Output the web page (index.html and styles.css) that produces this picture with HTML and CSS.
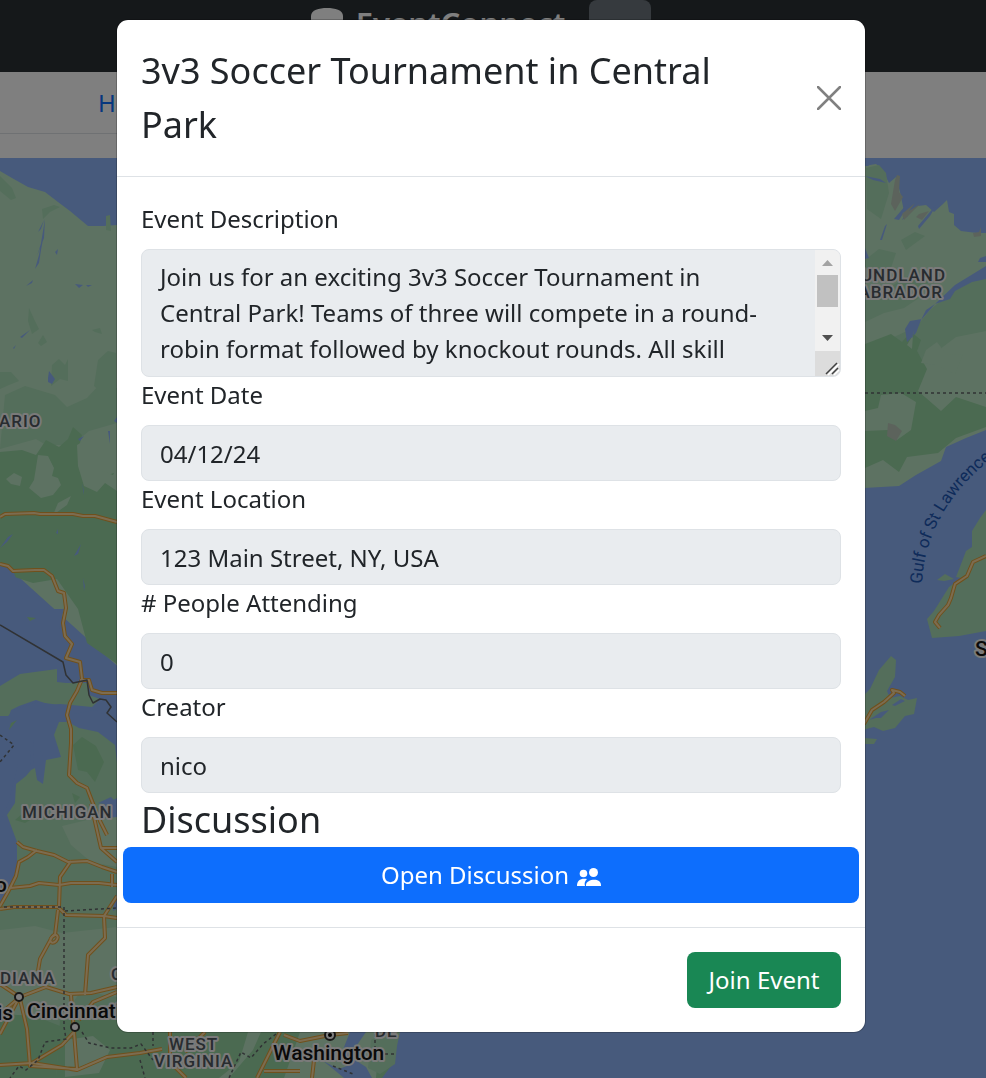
FILE: index.html
```html
<!DOCTYPE html>
<html lang="en">
<head>
<meta charset="utf-8">
<meta name="viewport" content="width=device-width, initial-scale=1">
<title>EventConnect</title>
<link rel="stylesheet" href="styles.css">
</head>
<body>
<div class="page">
  <header class="topbar">
    <svg class="logo" viewBox="0 0 32 40" aria-hidden="true"><path d="M0 8C0 2 8 0 16 0s16 2 16 8v24c0 10-32 10-32 0z"/></svg>
    <span class="brand">EventConnect</span>
    <button class="topbar-button" type="button" aria-label="Menu"></button>
  </header>
  <nav class="tabs"><a class="tab" href="#">Home</a></nav>
  <main class="map">
    <svg class="map-canvas" viewBox="0 158 986 920" preserveAspectRatio="xMinYMin slice" role="img" aria-label="Map">
      <rect class="water" y="158" width="986" height="920"/>
      <!-- Northern Ontario -->
      <path class="land" d="M0 171l12 7 16 9 17 5 13 10 12 9 18 15 15 0 14-1 20-2 18 5V700L0 560z"/>
      <path class="scrub" d="M0 176l12 12 4 10-5 2-11-9zM42 209l12-4 6 2-10 5-7 7zM106 216l4-1 1 16-5-1zM29 308l5 11 5 10-7 5-4-13zM38 343l5-8 4 7-6 4zM92 330l8-2 2 6-7-2zM98 360l10-9 8 2V400l-12-5-10-9zM52 365l7-6 6 6 3-6v22l-8-2-9 7zM0 372l11 0 8 9-10 4-9 4zM5 395l20-9 30 9 12 12 20-9 14-15 16 5v35l-28 8-17 14-26 0-10-6-36 10z"/>
      <path class="forest" d="M0 452l22-2 14 5 10-15 13 7 9-8 5-12 9 8-4 16 6 15 14 12 16-5 3 1v190l-30-21-9-34-21-30-24 4-34-11z"/>
      <path class="land" d="M38 455l10 1 6 12-2 8 6 2 3 7-8 10-12 3-12-10 5-8zM77 445l10-6 12 8-6 9 7 14 13 5 4-8v24l-12-8-8 9-13-6-6-20zM58 503l13-7-4 9-14 10zM6 479l8-6 8 4-2 9-9-2z"/>
      <path class="water" d="M45 219l-1 19-7 18 7-22-3 16-2 13-4 6 4-14zM38 232l6-12-3 9zM33 280l-7 6 6-3zM55 252l3-3-1 6zM75 284l8 1-4 3zM86 285h6l-4 2zM48 378l1-7 6 8-3 5-4-2zM20 337l10-7-8 8zM13 348l3-3-2 4zM78 439l6-3-4 5zM108 431h2v13zM114 421l3-4v6zM82 483l2 8v4zM0 548l8-11 5-3-6 8zM74 556l7-12-3 10zM56 533l2-4v5zM83 578l2 8-1 5z"/>
      <!-- Great Lakes -->
      <path class="water" d="M0 566l12 2 5 13 6 18 9 10 32 0-5 18 11 24 6 9-9 12-1 10-11 7-46 6-9 1z"/>
      <path class="scrub" d="M0 686l20-12 37-5v13l9 1 14 0 7 0 2 12 11 4-8 8-20-2-12-1-10 1-14-5-17 6-8 4-2 6-9 0z"/>
      <path class="water" d="M0 724l14-14 24-8 28 4 9 8 20-4 9 4 13 11v80l-20 6-27-10-30-50-6-12-1 27-2 0-1-16-12 14-9 37-9 22 9 13-9 8z"/>
      <path class="scrub" d="M54 735l5-13 9 0 11 6 19 4 17 13 2 18v35l-17 9v20h17v251H0V905l10-18 7-13V842l-10-27 8-12 1-19 10-8 5-6 4-2 2 12 6 4 3-24 15-3z"/>
      <path class="forest" d="M73 745l9-8 14 9 8 16-9 20-8-10-9-2zM17 720l-8 10 2-7zM27 617l9 1-6 3z"/>
      <path class="land" d="M0 930l35-4 27 7 55-6v70l-36-6-19 27-62-4zM62 826l25-6 30-3v50l-26-5-20-17z"/>
      <path class="forest" d="M0 1014l35 2 25 10-4 52H0zM15 820l14-12 8 8-12 7zM72 793l8 4-5 6z"/>
      <path class="water" d="M0 870l10-8 5-14 1 28-5 12-11 16zM98 803l13-6 6 6v3zM114 897l3-2v14l-4 2z"/>
      <!-- Appalachia -->
      <path class="forest" d="M60 1020h340l0 32-14 26H56z"/>
      <path class="land" d="M65 1040l28-4 17 14-11 23-34 4zM248 1032l-9 30-20 16h10l24-28 8-18zM300 1032l80 0-4 46h-92z"/>
      <path class="water" d="M350 1032h16l-9 13-5 13 14 9 6 11h-28l-12-10-9-7 16 8 8-3-5-14zM398 1032h588v46H382l9-12 5-16z"/>
      <path class="scrub" d="M371 1040l15-8h14l-3 14-2 18-15 10-12-6z"/>
      <!-- Newfoundland and Labrador -->
      <path class="land" d="M864 166l12-2 6 5 7 14 7-6 4 15 5 24 13-10 8-1 8 7 9-8 4-4 2 12 5 2v11l7 6 16 2 9 0V430l-20 8-20 9-5 14-25 14-17 11-35 2z"/>
      <path class="scrub" d="M866 168l13-3 7 8 3 20-8 26-14-10zM865 260l14-11 17 4-5 15-22 9-4 6zM901 240l14-8 10 4-19 14zM865 300l22-11 24-15 20 2-9 20-18 12-20 5-19 9zM986 270l-24 11-14 14-17 14-15 18-20 9-31 13v51l30-8 28-30 33-25 30-6z"/>
      <path class="forest" d="M865 344l26-10 11 8 9-10 10 8-4 11 10 18-9 22 23 20 15-14 30 10v20l-30 11-18 15-31 4-8 15-16-12-18 8z"/>
      <path class="land" d="M881 395l20-2 15 9-5 28-14 10-9-10-23 1v-20l13-3zM907 345l6-10-1 14zM926 350l11-8 10 13 16-1-8 20-20-9-14-2z"/>
      <path class="water" d="M865 176l15 3 6 4-13-3zM866 162l3 4-4 0zM880 240l5-14 2-2-5 16zM894 219l12-14-2 7-5 8zM902 220l8-15-2 11zM918 226l11-13 8-9-7 12-11 13zM907 342l9-9 5-13 5-10 9-6 20-19 31-19v13l-14 3-17 9-5 8-15 5-13 15-12 2-5 8zM980 258l6-2v6h-8zM912 338l2-8-1 7zM865 248l4 10-4 1z"/>
      <path class="rock" d="M895 180l2-5 3 1-1 16 4 5-8 14-4-7zM902 214l13-11-6 8 11-7-16 16zM919 214l10-3-7 9-6-3zM973 233l6-1 2-5v9l-7 1zM888 423l7 2 7 6-6 10-9-5z"/>
      <!-- Newfoundland and Cape Breton -->
      <path class="scrub" d="M986 510l-6 8-8 13v16l-6 4-3 8-7 18 5 1-12 9-15 24-7 8 5 19 27-2 27-5zM864 695l6-6 9-19 12-14 5 4-1 17-8 14 3 7 10-2 8 4 9-2-3 16-9 2-10 12-12 3-9-4-8 2-6 4zM937 580l8-6 9 5-10 2zM864 738l13 1-3 5h-10z"/>
      <path class="water" d="M869 720l12-8 8-2-8 8-5 0zM892 705l9-6 4 2-10 5z"/>
      <!-- Roads -->
      <g class="road-edge">
        <path id="r1" d="M0 517l5-3 29-1 6 1h33l10 2h12l22 6"/>
        <path id="r2" d="M0 564l8 2 5 5 22-1 9 0 8 6 6 15 6 2 2 15-3 15 2 13 7 8-6 14 14 4 2 17-5 12-7 12-3 12 4 14 0 14-2 32 8 8 10 5 5 13 8 20 7 14M80 680l9 0 3 10 10 3h15"/>
        <path id="r3" d="M17 842l6 5 14 4 17 4 14 7 19-1 15 6 15 5M37 850l-9 7-9 5-3 14-8 16-8 14M10 888l20-2 9-3 20 2 12-2h28l18 2M71 861l-11 16-1 30M0 909l14-2 44 0 8 8 38 1 13 2M101 848h16M91 804l10 44 16 14M112 874v13M117 896l-13 20 1 22-17 17-3 40M58 910l-3 25c-8 4-4 11 1 6 4-5-1-9-4-4l-12 22-2 12M18 996l-18-12M20 997l26-10 23 7 22-1 26-6M20 999l7 30 3 37 47 3-6-74M0 1014l20-17M20 996l-20 38M0 1065l32-2 30-18 13-14M117 992l-24 10-14 18M32 1063l45 7 30-13 33-4 22-4M170 1032v30l16 16M280 1032l-15 30-8 16M284 1035l16 6 30-6 18-2M264 1071h36M314 1060l-2 18M205 1032l-20 20"/>
        <path id="r4" d="M940 628l-5-6 4-7 9-10 3-7 4-14 12-8 6-14 13-6M864 724l8-14 12-8 10-9-2-3 8 2 5 4"/>
      </g>
      <g class="road"><use href="#r1"/><use href="#r2"/><use href="#r3"/><use href="#r4"/></g>
      <!-- Borders -->
      <g class="border">
        <path d="M0 625l63 37 3 13 7 8 14-3 2 15 4 8 7-4 6 1 5 7-4 6 10 9"/>
        <path stroke-dasharray="3 3" d="M0 735l14 10-14 17M4 907h60v120l2 12-21 3-7 18-12 10-7-4-9 12M65 911l52-3M82 1032l7 11 22 5h20l10-4 12 16M153 1032v14M140 1060l5 18M276 1034l-13 10-12 14-10-6-12 26M375 1034v20h20M333 1066l20 8M865 393h121"/>
      </g>
      <!-- Labels -->
      <g class="region">
        <text x="-1" y="427">ARIO</text>
        <text x="22" y="818">MICHIGAN</text>
        <text x="0" y="984">DIANA</text>
        <text x="111" y="980">O</text>
        <text x="169" y="1050">WEST</text>
        <text x="154" y="1067">VIRGINIA</text>
        <text x="375" y="1037">DE</text>
        <text x="946" y="281" text-anchor="end">NEWFOUNDLAND</text>
        <text x="943" y="298" text-anchor="end">AND LABRADOR</text>
      </g>
      <g class="city">
        <text x="-5" y="892">o</text>
        <text x="-3" y="1020">is</text>
        <text x="27" y="1018">Cincinnati</text>
        <text x="273" y="1060">Washington</text>
        <text x="975" y="656">St. John's</text>
      </g>
      <g class="town"><circle cx="19" cy="997" r="4"/><circle cx="75" cy="1027" r="4"/><circle cx="330" cy="1035" r="5"/></g>
      <circle cx="330" cy="1035" r="2"/>
      <path id="gulf" class="guide" d="M922 584C924 534 950 492 990 460"/>
      <text class="sea"><textPath href="#gulf">Gulf of St Lawrence</textPath></text>
    </svg>
  </main>
</div>

<div class="backdrop">
  <section class="modal" role="dialog" aria-modal="true" aria-labelledby="event-title">
    <header class="modal-header">
      <h1 class="title" id="event-title">3v3 Soccer Tournament in Central Park</h1>
      <button class="close" type="button" aria-label="Close">
        <svg viewBox="0 0 24 24" aria-hidden="true"><path d="M1 1l22 22M23 1L1 23"/></svg>
      </button>
    </header>
    <form class="modal-body">
      <label class="label" for="description">Event Description</label>
      <div class="area-wrap">
        <textarea class="field area" id="description" readonly>Join us for an exciting 3v3 Soccer Tournament in Central Park! Teams of three will compete in a round-robin format followed by knockout rounds. All skill levels are welcome. Don't miss the chance for glory and fun.</textarea>
        <svg class="scroller" viewBox="0 0 25 126" aria-hidden="true">
          <path fill="#f1f1f1" d="M0 0h25v101H0z"/><path fill="#dcdcdc" d="M0 101h25v25H0z"/>
          <path fill="#c1c1c1" d="M2 25h21v32H2z"/>
          <path fill="#a3a3a3" d="M7 16l5.500-6 5.500 6z"/><path fill="#505050" d="M7 85h11l-5.500 6z"/>
          <path stroke="#fff" stroke-width="1.500" d="M13 125l11-11M19 125l5-5"/>
          <path stroke="#404040" stroke-width="1.500" d="M11 124l11-11M17 124l6-6"/>
        </svg>
      </div>
      <label class="label" for="date">Event Date</label>
      <input class="field" id="date" type="text" value="04/12/24" readonly>
      <label class="label" for="location">Event Location</label>
      <input class="field" id="location" type="text" value="123 Main Street, NY, USA" readonly>
      <label class="label" for="people"># People Attending</label>
      <input class="field" id="people" type="text" value="0" readonly>
      <label class="label" for="creator">Creator</label>
      <input class="field" id="creator" type="text" value="nico" readonly>
      <h2 class="title">Discussion</h2>
      <button class="button primary" type="button">Open Discussion
        <svg class="people" viewBox="0 0 24 18" aria-hidden="true"><circle cx="6.500" cy="5.500" r="3.800"/><circle cx="16.500" cy="4.500" r="4.500"/><path d="M9 18v-1c0-6 15-8 15 0v1zM0 18c0-6 4-8 10-7-2 2-3 4-2 7z"/></svg>
      </button>
    </form>
    <footer class="modal-footer"><button class="button success" type="button">Join Event</button></footer>
  </section>
</div>
</body>
</html>
```
FILE: styles.css
```css
* { box-sizing: border-box; }
body {
  margin: 0;
  overflow: hidden;
  color: #212529;
  font: 24px/36px "Segoe UI", "Noto Sans", sans-serif;
}
button, input, textarea { font: inherit; color: inherit; }

.page { display: flex; flex-direction: column; height: 100vh; }
.topbar {
  display: flex;
  justify-content: center;
  align-items: flex-start;
  height: 72px;
  padding-right: 24px;
  background: #2b3035;
}
.logo { width: 32px; margin: 8px 13px 0 0; fill: #fff; }
.brand { color: #fff; font-size: 31px; font-weight: 600; line-height: 46px; }
.topbar-button {
  width: 62px;
  height: 48px;
  margin-left: 24px;
  border: 0;
  border-radius: 8px;
  background: #6c757d;
}
.tabs {
  width: 85%;
  padding: 13px 98px 12px;
  margin-bottom: 24px;
  border-bottom: 1px solid #dee2e6;
}
.tab { color: #0d6efd; text-decoration: none; }

.map { flex: 1; min-height: 0; }
.map-canvas { display: block; width: 100%; height: 100%; }
.water { fill: #8eb4f8; }
.land { fill: #bae4c4; }
.scrub { fill: #a8dcb6; }
.forest { fill: #96d4a2; }
.rock { fill: #b8c6b8; }
.road-edge, .road, .border { fill: none; stroke-linejoin: round; }
.road-edge { stroke: #e0a038; stroke-width: 4; }
.road { stroke: #f8d8a0; stroke-width: 2; }
.road use { stroke: #f8d8a0; }
.border { stroke: #606468; stroke-width: 1.500; }
.region, .city { font-family: Roboto, sans-serif; paint-order: stroke; stroke: #f4f4f4; stroke-width: 4; stroke-linejoin: round; }
.region { fill: #505860; font-size: 17px; font-weight: 500; letter-spacing: 1px; }
.city { fill: #141414; font-size: 21px; font-weight: 500; }
.town { fill: #fff; stroke: #303030; stroke-width: 2; }
.guide { fill: none; }
.sea { fill: #1c56b4; font: 17px Roboto, sans-serif; }

.backdrop {
  position: fixed;
  inset: 0;
  overflow: hidden;
  padding: 19px 4px 19px 0;
  background: rgba(0, 0, 0, 0.5);
}
.modal {
  max-width: 750px;
  margin: 0 auto;
  border: 1px solid rgba(0, 0, 0, 0.2);
  border-radius: 12px;
  background: #fff;
  background-clip: padding-box;
}
.modal-header {
  display: flex;
  align-items: center;
  justify-content: space-between;
  gap: 24px;
  padding: 24px;
  border-bottom: 1px solid #dee2e6;
}
.title { margin: 0; font-size: 36px; font-weight: 400; line-height: 54px; }
.close { display: flex; padding: 0; border: 0; background: none; }
.close svg { width: 24px; fill: none; stroke: #808080; stroke-width: 2.500; stroke-linecap: round; }
.modal-body { display: flex; flex-direction: column; padding: 24px; }
.label { margin-bottom: 12px; }
.field {
  display: block;
  width: 100%;
  height: 56px;
  padding: 9px 18px;
  border: 1px solid #dee2e6;
  border-radius: 8px;
  background: #e9ecef;
  outline: 0;
}
.area-wrap { position: relative; }
.area { height: 128px; padding-right: 70px; resize: none; overflow: hidden; }
.scroller {
  position: absolute;
  top: 1px;
  right: 1px;
  width: 25px;
  height: 126px;
  border-radius: 0 7px 7px 0;
}
.button {
  height: 56px;
  padding: 0 20px;
  border: 0;
  border-radius: 8px;
  color: #fff;
}
.primary { display: flex; align-items: center; justify-content: center; gap: 8px; margin: 0 -18px; background: #0d6efd; }
.people { width: 24px; margin-top: 4px; fill: #fff; }
.modal-footer { display: flex; justify-content: flex-end; padding: 24px; border-top: 1px solid #dee2e6; }
.success { min-width: 154px; background: #198754; }
```
